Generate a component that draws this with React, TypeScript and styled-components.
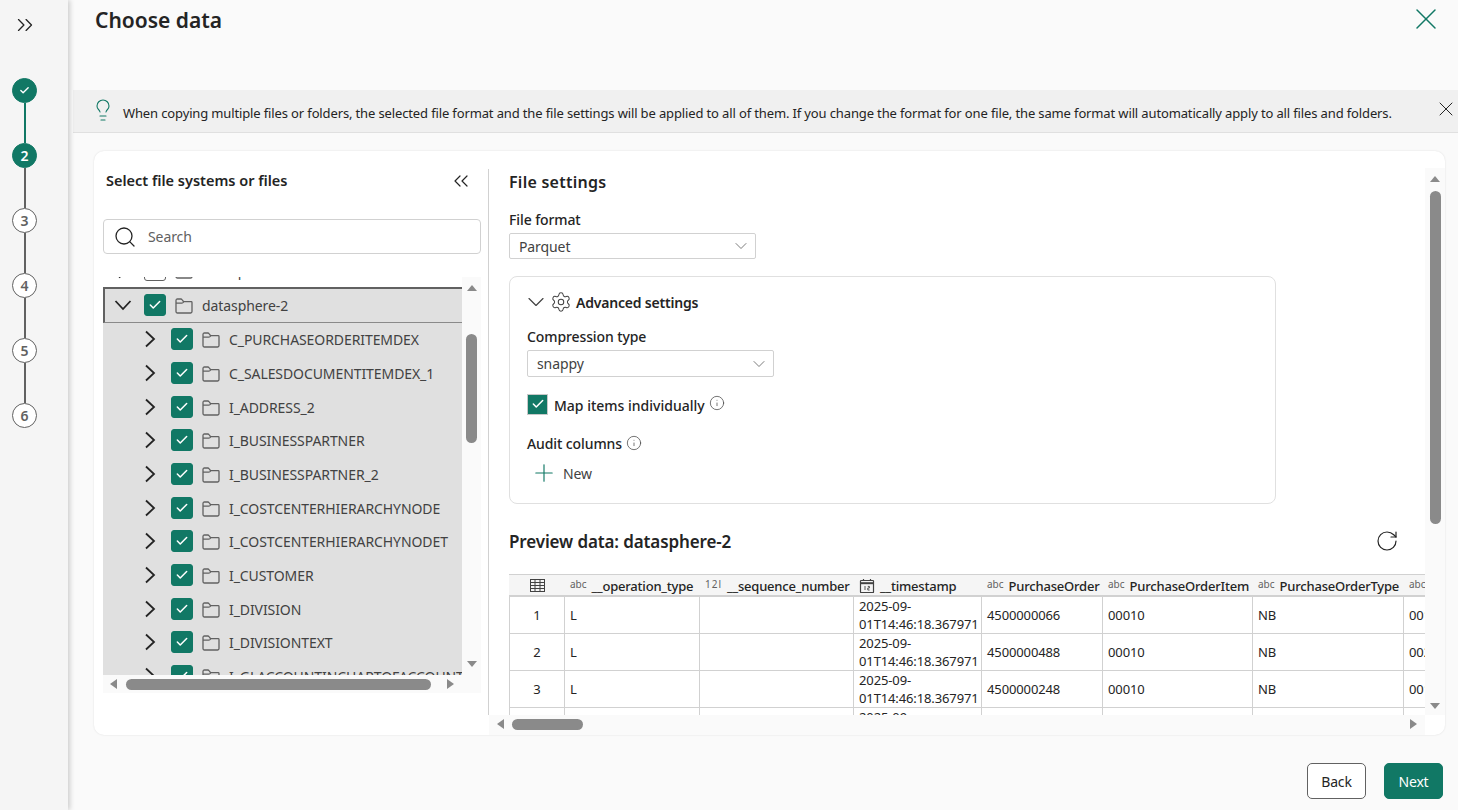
import React from "react";
import styled, { createGlobalStyle } from "styled-components";
import { ChevronsRight, ChevronsLeft, Lightbulb, X, Search, ChevronDown, Check, Settings, Info, Plus, RotateCw } from "lucide-react";

const FONT = `"Noto Sans", "Open Sans", sans-serif`;
const GREEN = "#117865";

const Global = createGlobalStyle`
  html, body { margin: 0; padding: 0; width: 1458px; height: 810px; overflow: hidden; }
  body { font-family: ${FONT}; color: #242424; font-size: 14px; letter-spacing: -0.1px; }
  * { box-sizing: border-box; }
  svg { flex: none; }
`;

const Page = styled.div`display: flex; width: 1458px; height: 810px; background: #fafafa;`;

const Sidebar = styled.nav`
  width: 68px; flex: none; background: #f5f5f5; display: flex; flex-direction: column; align-items: center;
  padding-right: 19px; box-shadow: 2px 0 5px rgba(0,0,0,.18); position: relative; z-index: 1;
`;
const Expand = styled.div`height: 78px; padding-top: 12px; color: #242424; display: flex;`;
const StepDot = styled.div<{ $on?: boolean }>`
  width: 25px; height: 25px; border-radius: 50%; flex: none; display: flex; align-items: center; justify-content: center;
  font-size: 14px; font-weight: 600; letter-spacing: 0;
  background: ${p => (p.$on ? GREEN : "#fff")}; color: ${p => (p.$on ? "#fff" : "#616161")};
  border: 1px solid ${p => (p.$on ? GREEN : "#616161")};
`;
const Connector = styled.div<{ $on?: boolean }>`width: 2px; height: 40px; flex: none; background: ${p => (p.$on ? GREEN : "#616161")};`;

const Main = styled.main`flex: 1; min-width: 0; display: flex; flex-direction: column;`;
const Header = styled.header`height: 90px; flex: none; display: flex; justify-content: space-between; padding: 5px 14px 0 27px;`;
const Title = styled.h1`margin: 0; font-size: 21px; line-height: 30px; font-weight: 600; color: #242424; letter-spacing: 0;`;
const CloseBtn = styled.div`color: ${GREEN}; display: flex; margin-top: -4px;`;
const Notice = styled.div`
  height: 43px; flex: none; margin-left: 5px; background: #f0f0f0; border-bottom: 1px solid #e0e0e0;
  display: flex; padding: 0 0 0 18px; font-size: 13px;
`;
const BulbBox = styled.div`color: ${GREEN}; padding-top: 8px; width: 32px; flex: none; display: flex;`;
const NoticeText = styled.div`flex: 1; line-height: 18px; padding-top: 14px; white-space: nowrap; letter-spacing: -0.135px;`;
const NoticeClose = styled.div`padding-top: 7px; display: flex; color: #242424;`;

const Body = styled.div`flex: none; padding: 18px 13px 0 26px;`;
const Card = styled.section`
  height: 584px; background: #fff; border-radius: 10px; display: flex; overflow: hidden;
  box-shadow: 0 0 2px rgba(0,0,0,.12);
`;
const LeftPane = styled.div`width: 394px; flex: none; padding: 0 7px 0 9px; display: flex; flex-direction: column;`;
const PaneHead = styled.div`height: 68px; flex: none; padding: 18px 8px 0 3px; display: flex; justify-content: space-between; align-items: flex-start;`;
const PaneTitle = styled.div`font-size: 14.5px; line-height: 22px; font-weight: 600; letter-spacing: 0;`;
const SearchBox = styled.div`
  height: 35px; flex: none; border: 1px solid #d1d1d1; border-radius: 4px; display: flex; align-items: center;
  padding-left: 9px; gap: 11px; color: #616161; font-size: 14px;
`;
const TreeFrame = styled.div`margin-top: 23px; display: grid; grid-template-columns: 359px 19px; grid-template-rows: 398px 18px;`;
const TreeView = styled.div`overflow: hidden; background: #fff;`;
const TreeList = styled.div`margin-top: -24px; width: 359px;`;
const RowEl = styled.div<{ $sel?: boolean; $focus?: boolean; $level: number }>`
  height: ${p => (p.$focus ? "36px" : "33.67px")}; display: flex; align-items: center; white-space: nowrap; overflow: hidden;
  padding-left: ${p => 10 + p.$level * 27 - (p.$focus ? 2 : 0)}px;
  background: ${p => (p.$sel ? "#e0e0e0" : "#fff")};
  ${p => (p.$focus ? "border-top: 2px solid #616161; border-left: 2px solid #616161; border-bottom: 1px solid #8a8a8a;" : "")}
  color: #424242; font-size: 14px; letter-spacing: -0.08px;
`;
const Caret = styled.div`width: 20px; flex: none; display: flex; justify-content: center; color: #242424;`;
const Box = styled.div<{ $checked?: boolean }>`
  width: 22px; height: 22px; flex: none; margin-left: 11px; border-radius: 3px; display: flex; align-items: center; justify-content: center;
  background: ${p => (p.$checked ? GREEN : "#fff")}; color: #fff; border: 1px solid ${p => (p.$checked ? GREEN : "#616161")};
`;
const FolderSlot = styled.svg`width: 18px; height: 16px; flex: none; margin: 2px 9px 0 9px;`;
const RowName = styled.span`padding-top: 1px;`;

const VTrack = styled.div`
  background: #fafafa; display: flex; flex-direction: column; align-items: center; padding: 8px 0;
`;
const PageTrack = styled(VTrack)`width: 20px; height: 547px; margin-top: 17px; padding-bottom: 6px;`;
const HTrack = styled.div`background: #fafafa; display: flex; align-items: center; padding: 0 0 0 7px;`;
const ThumbV = styled.div<{ $top: number; $h: number }>`
  width: 11px; height: ${p => p.$h}px; margin-top: ${p => p.$top}px; background: #8a8a8a; border-radius: 6px; flex: none;
`;
const ThumbH = styled.div<{ $left: number; $w: number }>`
  height: 11px; width: ${p => p.$w}px; margin-left: ${p => p.$left}px; background: #8a8a8a; border-radius: 6px; flex: none;
`;
const ArrowUp = styled.div`width: 0; height: 0; border: 5px solid transparent; border-top: 0; border-bottom: 6px solid #8a8a8a; flex: none;`;
const ArrowDown = styled.div`width: 0; height: 0; border: 5px solid transparent; border-bottom: 0; border-top: 6px solid #8a8a8a; flex: none; margin-top: auto;`;
const ArrowLeft = styled.div`width: 0; height: 0; border: 5px solid transparent; border-left: 0; border-right: 7px solid #8a8a8a; flex: none;`;
const ArrowRight = styled.div<{ $left: number }>`width: 0; height: 0; border: 5px solid transparent; border-right: 0; border-left: 7px solid #8a8a8a; flex: none; margin-left: ${p => p.$left}px;`;

const Divider = styled.div`width: 1px; flex: none; margin: 18px 0 20px; background: #d1d1d1;`;
const RightPane = styled.div`flex: 1; min-width: 0; display: flex;`;
const RightCol = styled.div`width: 936px; flex: none; display: flex; flex-direction: column;`;
const RightScroll = styled.div`height: 564px; flex: none; padding: 19px 0 0 20px; overflow: hidden;`;
const Heading = styled.h2`margin: 0; font-size: 16px; line-height: 24px; font-weight: 600; letter-spacing: 0.25px;`;
const Label = styled.div<{ $top: number }>`font-size: 14px; line-height: 20px; font-weight: 500; margin-top: ${p => p.$top}px; display: flex; align-items: center;`;
const SelectEl = styled.div<{ $h: number; $top: number }>`
  width: 247px; height: ${p => p.$h}px; margin-top: ${p => p.$top}px; border: 1px solid #d1d1d1; border-radius: 2px;
  display: flex; align-items: center; justify-content: space-between; padding: 0 4px 0 9px; font-size: 14px; color: #424242;
  svg { color: #616161; }
`;
const Advanced = styled.div`
  width: 767px; height: 228px; margin-top: 17px; border: 1px solid #e0e0e0; border-radius: 8px; padding: 14px 0 0 17px;
`;
const AdvHead = styled.div`height: 22px; display: flex; align-items: center; font-weight: 600; font-size: 14px; color: #242424; letter-spacing: -0.2px;`;
const AdvChevron = styled.div`width: 28px; margin-left: -5px; display: flex; color: #424242;`;
const Gear = styled.div`display: flex; width: 26px; color: #424242;`;
const CheckRow = styled.div`margin-top: 16px; height: 22px; display: flex; align-items: center; font-weight: 500; font-size: 14px; color: #242424;`;
const CheckLabel = styled.span`padding-top: 2px; letter-spacing: 0;`;
const FormBox = styled.div`
  width: 21px; height: 21px; flex: none; margin-right: 6px; background: ${GREEN}; border: 1px solid #c8c8c8; color: #fff;
  display: flex; align-items: center; justify-content: center;
`;
const InfoWrap = styled.span`display: inline-flex; color: #424242; margin: 0 0 2px 4px;`;
const NewBtn = styled.div`margin-top: 8px; height: 22px; display: flex; align-items: center; padding-left: 3px; gap: 5px; font-size: 14px; color: #424242;`;
const PlusIcon = styled.span`display: flex; color: ${GREEN};`;
const PreviewHead = styled.div`margin-top: 25px; height: 26px; display: flex; align-items: center; justify-content: space-between; padding-right: 26px;`;
const PreviewTitle = styled.h2`margin: 0; font-size: 17px; line-height: 26px; font-weight: 600; letter-spacing: -0.12px;`;
const RefreshBtn = styled.span`display: flex; color: #242424; margin-bottom: 2px;`;
const TableWrap = styled.div`margin-top: 19px; height: 141px; overflow: hidden;`;
const Grid = styled.table`border-collapse: separate; border-spacing: 0; table-layout: fixed; width: 1055px; font-size: 13px;`;
const Th = styled.th`
  height: 23px; padding: 1px 0 0 5px; background: #f5f5f5; border-top: 1px solid #d1d1d1; border-bottom: 2px solid #d1d1d1;
  text-align: left; font-weight: 500; white-space: nowrap; overflow: hidden; color: #242424; font-size: 13px; letter-spacing: -0.2px;
  &:first-child { padding-left: 0; }
`;
const ThInner = styled.div<{ $center?: boolean }>`display: flex; align-items: center; gap: 5px; ${p => (p.$center ? "justify-content: center;" : "")}`;
const TypeTag = styled.span<{ $wide?: boolean }>`
  font-size: 10px; color: #616161; font-weight: 400; position: relative; top: -2px; letter-spacing: ${p => (p.$wide ? "1px" : "0")};
`;
const Td = styled.td<{ $center?: boolean }>`
  height: 37px; padding: 1px 5px 0; border-right: 1px solid #d1d1d1; border-bottom: 1px solid #d1d1d1; white-space: nowrap; overflow: hidden;
  line-height: 17.5px; color: #242424; letter-spacing: -0.12px; text-align: ${p => (p.$center ? "center" : "left")};
  &:first-child { border-left: 1px solid #d1d1d1; }
`;
const BottomBar = styled.div`height: 20px; flex: none; background: #fafafa; display: flex; align-items: center; padding: 0 0 2px 8px;`;
const Footer = styled.footer`flex: 1; display: flex; justify-content: flex-end; gap: 18px; padding: 28px 15px 0 0;`;
const Btn = styled.button<{ $primary?: boolean }>`
  width: 59px; height: 36px; border-radius: 5px; font-family: ${FONT}; font-size: 14px; letter-spacing: -0.2px; cursor: pointer;
  background: ${p => (p.$primary ? GREEN : "#fff")}; color: ${p => (p.$primary ? "#fff" : "#242424")};
  border: 1px solid ${p => (p.$primary ? GREEN : "#616161")};
`;

const FolderIcon = () => (
  <FolderSlot viewBox="0 0 18 16" fill="none" stroke="#616161" strokeWidth="1.3">
    <path d="M1 13.6V2.4C1 1.6 1.6 1 2.4 1h3.4c.5 0 .9.2 1.2.6L8.6 3.6h7.6c.5 0 .8.3.8.8v9.2c0 .8-.6 1.4-1.4 1.4H2.4C1.6 15 1 14.4 1 13.6Z" />
    <path d="M1 5.2h5.6c.6 0 1-.2 1.4-.6l.6-1" />
  </FolderSlot>
);
const CaretRight = () => (
  <svg width="12" height="18" viewBox="0 0 12 18" fill="none" stroke="currentColor" strokeWidth="1.8"><path d="M2 1.5 10 9l-8 7.5" /></svg>
);
const CaretDown = () => (
  <svg width="18" height="12" viewBox="0 0 18 12" fill="none" stroke="currentColor" strokeWidth="1.8"><path d="M1.5 2 9 10l7.5-8" /></svg>
);

const TreeRow = ({ name, level = 0, open, checked = true, sel = true, focus }: { name: string; level?: number; open?: boolean; checked?: boolean; sel?: boolean; focus?: boolean }) => (
  <RowEl $sel={sel} $focus={focus} $level={level}>
    <Caret>{open ? <CaretDown /> : <CaretRight />}</Caret>
    <Box $checked={checked}>{checked && <Check size={14} strokeWidth={2.6} />}</Box>
    <FolderIcon />
    <RowName>{name}</RowName>
  </RowEl>
);

const CalendarIcon = () => (
  <svg width="16" height="16" viewBox="0 0 16 16" fill="none" stroke="#424242" strokeWidth="1.2">
    <rect x="1.5" y="2.5" width="13" height="12" rx="0.6" />
    <path d="M1.5 5.2h13" strokeWidth="2" />
    <path d="M4.5 1v2M11.5 1v2" />
    <path d="M6 8v4M8.8 8.4h1.6v1.6H8.8v2h1.8" strokeWidth="0.9" />
  </svg>
);
const GridIcon = () => (
  <svg width="15" height="13" viewBox="0 0 15 13" fill="none" stroke="#424242" strokeWidth="1">
    <rect x="0.5" y="0.5" width="14" height="12" />
    <path d="M0.5 3.5h14M0.5 6.5h14M0.5 9.5h14M5 0.5v12M10 0.5v12" />
  </svg>
);

const children = ["C_PURCHASEORDERITEMDEX", "C_SALESDOCUMENTITEMDEX_1", "I_ADDRESS_2", "I_BUSINESSPARTNER", "I_BUSINESSPARTNER_2", "I_COSTCENTERHIERARCHYNODE", "I_COSTCENTERHIERARCHYNODET", "I_CUSTOMER", "I_DIVISION", "I_DIVISIONTEXT", "I_GLACCOUNTINCHARTOFACCOUNT"];
const cols = [56, 135, 154, 128, 121, 150, 151, 160];
const heads: { tag?: string; name: string }[] = [
  { tag: "abc", name: "__operation_type" },
  { tag: "12l", name: "__sequence_number" },
  { name: "__timestamp" },
  { tag: "abc", name: "PurchaseOrder" },
  { tag: "abc", name: "PurchaseOrderItem" },
  { tag: "abc", name: "PurchaseOrderType" },
  { tag: "abc", name: "" },
];
const rows = [["1", "4500000066", "0010"], ["2", "4500000488", "0020"], ["3", "4500000248", "0010"]];
const Stamp = () => <>2025-09-<br />01T14:46:18.367971</>;

export default function App() {
  return (
    <Page>
      <Global />
      <Sidebar>
        <Expand><ChevronsRight size={26} strokeWidth={1.2} /></Expand>
        <StepDot $on><Check size={11} strokeWidth={3} /></StepDot>
        <Connector $on />
        <StepDot $on>2</StepDot>
        {[3, 4, 5, 6].map(n => (
          <React.Fragment key={n}>
            <Connector />
            <StepDot>{n}</StepDot>
          </React.Fragment>
        ))}
      </Sidebar>
      <Main>
        <Header>
          <Title>Choose data</Title>
          <CloseBtn><X size={36} strokeWidth={1} /></CloseBtn>
        </Header>
        <Notice>
          <BulbBox><Lightbulb size={24} strokeWidth={1.1} /></BulbBox>
          <NoticeText>When copying multiple files or folders, the selected file format and the file settings will be applied to all of them. If you change the format for one file, the same format will automatically apply to all files and folders.</NoticeText>
          <NoticeClose><X size={24} strokeWidth={1} /></NoticeClose>
        </Notice>
        <Body>
          <Card>
            <LeftPane>
              <PaneHead>
                <PaneTitle>Select file systems or files</PaneTitle>
                <ChevronsLeft size={24} strokeWidth={1.2} />
              </PaneHead>
              <SearchBox><Search size={24} strokeWidth={1.3} color="#242424" />Search</SearchBox>
              <TreeFrame>
                <TreeView>
                  <TreeList>
                    <TreeRow name="datasphere-1" checked={false} sel={false} />
                    <TreeRow name="datasphere-2" open focus />
                    {children.map(c => <TreeRow key={c} name={c} level={1} />)}
                  </TreeList>
                </TreeView>
                <VTrack>
                  <ArrowUp />
                  <ThumbV $top={43} $h={109} />
                  <ArrowDown />
                </VTrack>
                <HTrack>
                  <ArrowLeft />
                  <ThumbH $left={9} $w={305} />
                  <ArrowRight $left={16} />
                </HTrack>
                <HTrack />
              </TreeFrame>
            </LeftPane>
            <Divider />
            <RightPane>
              <RightCol>
                <RightScroll>
                  <Heading>File settings</Heading>
                  <Label $top={16}>File format</Label>
                  <SelectEl $h={26} $top={3}>Parquet<ChevronDown size={20} strokeWidth={1} /></SelectEl>
                  <Advanced>
                    <AdvHead>
                      <AdvChevron><ChevronDown size={28} strokeWidth={1} /></AdvChevron>
                      <Gear><Settings size={22} strokeWidth={1.1} /></Gear>
                      Advanced settings
                    </AdvHead>
                    <Label $top={14}>Compression type</Label>
                    <SelectEl $h={27} $top={3}>snappy<ChevronDown size={20} strokeWidth={1} /></SelectEl>
                    <CheckRow>
                      <FormBox><Check size={14} strokeWidth={2.6} /></FormBox>
                      <CheckLabel>Map items individually</CheckLabel>
                      <InfoWrap><Info size={16} strokeWidth={1.1} /></InfoWrap>
                    </CheckRow>
                    <Label $top={19}>Audit columns<InfoWrap><Info size={16} strokeWidth={1.1} /></InfoWrap></Label>
                    <NewBtn>
                      <PlusIcon><Plus size={28} strokeWidth={1} /></PlusIcon>
                      New
                    </NewBtn>
                  </Advanced>
                  <PreviewHead>
                    <PreviewTitle>Preview data: datasphere-2</PreviewTitle>
                    <RefreshBtn><RotateCw size={24} strokeWidth={1.2} /></RefreshBtn>
                  </PreviewHead>
                  <TableWrap>
                    <Grid>
                      <colgroup>{cols.map((w, i) => <col key={i} width={w} />)}</colgroup>
                      <thead>
                        <tr>
                          <Th><ThInner $center><GridIcon /></ThInner></Th>
                          {heads.map((h, i) => (
                            <Th key={i}>
                              <ThInner>{h.tag ? <TypeTag $wide={h.tag === "12l"}>{h.tag}</TypeTag> : <CalendarIcon />}{h.name}</ThInner>
                            </Th>
                          ))}
                        </tr>
                      </thead>
                      <tbody>
                        {rows.map(r => (
                          <tr key={r[0]}>
                            <Td $center>{r[0]}</Td>
                            <Td>L</Td>
                            <Td />
                            <Td><Stamp /></Td>
                            <Td>{r[1]}</Td>
                            <Td>00010</Td>
                            <Td>NB</Td>
                            <Td>{r[2]}</Td>
                          </tr>
                        ))}
                        <tr>
                          <Td $center>4</Td><Td>L</Td><Td /><Td><Stamp /></Td><Td /><Td /><Td /><Td />
                        </tr>
                      </tbody>
                    </Grid>
                  </TableWrap>
                </RightScroll>
                <BottomBar>
                  <ArrowLeft />
                  <ThumbH $left={8} $w={71} />
                  <ArrowRight $left={827} />
                </BottomBar>
              </RightCol>
              <PageTrack>
                <ArrowUp />
                <ThumbV $top={9} $h={333} />
                <ArrowDown />
              </PageTrack>
            </RightPane>
          </Card>
        </Body>
        <Footer>
          <Btn>Back</Btn>
          <Btn $primary>Next</Btn>
        </Footer>
      </Main>
    </Page>
  );
}
